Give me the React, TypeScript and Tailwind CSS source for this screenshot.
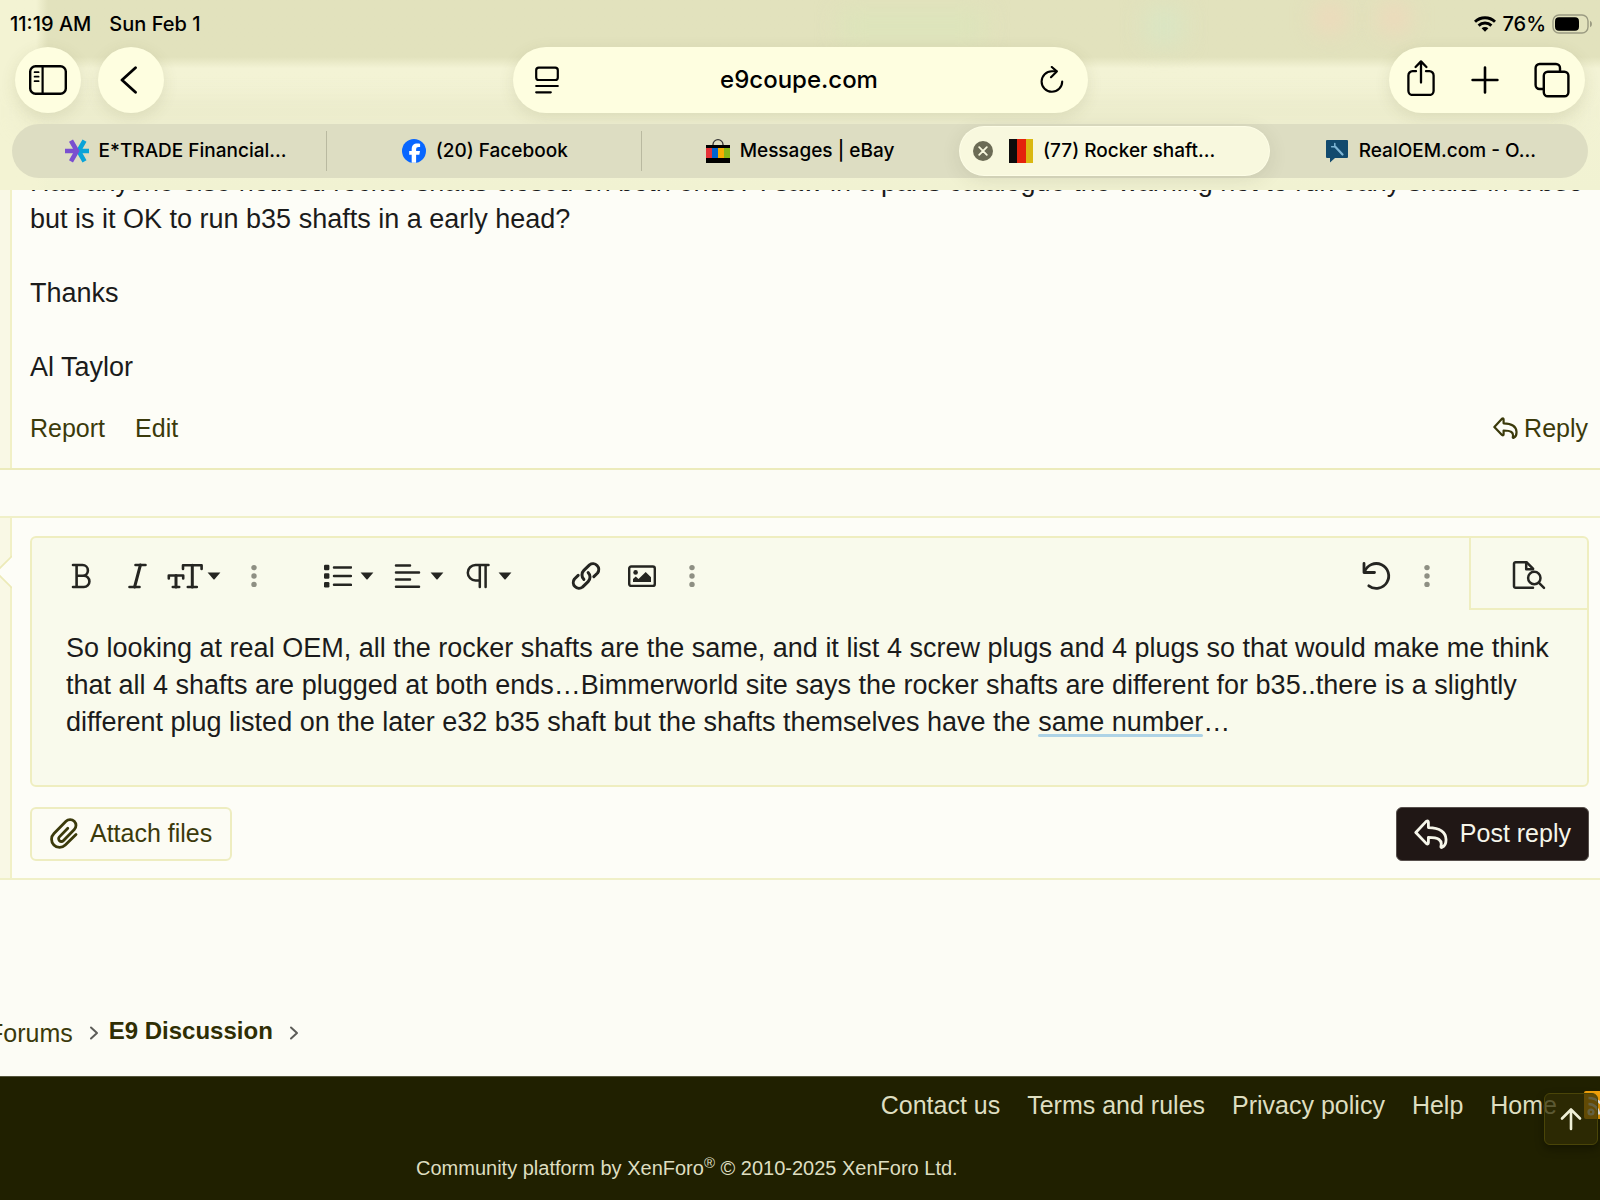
import type { ReactNode } from 'react';

const Caret = () => (
    <svg className="h-2 w-3.5" viewBox="0 0 14 8" fill="currentColor">
        <path d="M.6.6h12.8L7.6 7.2a.9.9 0 0 1-1.2 0z" />
    </svg>
)

const Dots = () => (
    <svg className="h-6 w-2 text-[#8e8f83]" viewBox="0 0 8 24" fill="currentColor">
        <circle cx="4" cy="3.6" r="2.7" />
        <circle cx="4" cy="12" r="2.7" />
        <circle cx="4" cy="20.4" r="2.7" />
    </svg>
)

const ReplyArrow = ({ className, strokeWidth }: { className: string; strokeWidth: number }) => (
    <svg className={className} viewBox="0 0 34 30" fill="none" stroke="currentColor" strokeWidth={strokeWidth} strokeLinejoin="round" strokeLinecap="round">
        <path d="M1.8 13.5 12.2 2.4Q14.4.9 14.4 3.4V8.6C25 8.8 31.6 12.6 32 20.2C32.2 24 30.4 27.3 28.2 28.3Q26.6 29 27 27.1C28.4 21 24.5 18.5 14.4 18.4V23.6Q14.2 26 12.2 24.4z" />
    </svg>
)

const Chevron = () => (
    <svg className="h-3.5 w-2.5 text-[#5c5c58]" viewBox="0 0 10 14" fill="none" stroke="currentColor" strokeWidth="2" strokeLinecap="round" strokeLinejoin="round">
        <path d="M2 1.5 8 7 2 12.5" />
    </svg>
)

const SidebarIcon = () => (
    <svg className="h-8 w-10" viewBox="0 0 40 32" fill="none" stroke="currentColor" strokeLinecap="round">
        <rect x="2.2" y="2.2" width="35.6" height="27.6" rx="5.4" strokeWidth="2.4" />
        <path d="M14.6 2.5v27" strokeWidth="2.2" />
        <path d="M6.6 8.2h4M6.6 12.7h4M6.6 17.2h4" strokeWidth="1.8" />
    </svg>
)

const BackIcon = () => (
    <svg className="mr-1 h-7 w-5" viewBox="0 0 20 28" fill="none" stroke="currentColor" strokeWidth="2.8" strokeLinecap="round" strokeLinejoin="round">
        <path d="M16.5 1.8 3 14l13.5 12.2" />
    </svg>
)

const ReaderIcon = () => (
    <svg className="h-7 w-6" viewBox="0 0 24 28" fill="none" stroke="currentColor" strokeWidth="2.2" strokeLinecap="round">
        <rect x="1.2" y="1.6" width="21.6" height="12.4" rx="2.6" />
        <path d="M1.2 20h21.6M1.2 26.3h14.6" />
    </svg>
)

const ReloadIcon = () => (
    <svg className="h-7 w-6" viewBox="0 0 24 28" fill="none" stroke="currentColor" strokeWidth="2.1" strokeLinecap="round" strokeLinejoin="round">
        <path d="M22.2 15.5A10.3 10.3 0 1 1 12 5.2h4.5" />
        <path d="M11.8 1 16.8 5.4 11 11.2" />
    </svg>
)

const ShareIcon = () => (
    <svg className="h-9 w-7" viewBox="0 0 28 36" fill="none" stroke="currentColor" strokeWidth="2.3" strokeLinecap="round" strokeLinejoin="round">
        <path d="M9 11.2H5.6A4.2 4.2 0 0 0 1.4 15.4V31a4.2 4.2 0 0 0 4.2 4h16.8a4.2 4.2 0 0 0 4.2-4V15.4A4.2 4.2 0 0 0 22.4 11.2H19" />
        <path d="M14 22.5V1.6M8.6 7 14 1.4 19.4 7" />
    </svg>
)

const PlusIcon = () => (
    <svg className="h-7 w-7" viewBox="0 0 28 28" fill="none" stroke="currentColor" strokeWidth="2.6" strokeLinecap="round">
        <path d="M14 1.6v24.8M1.6 14h24.8" />
    </svg>
)

const TabsIcon = () => (
    <svg className="h-9 w-9" viewBox="0 0 36 36" fill="none" stroke="currentColor" strokeWidth="2.4" strokeLinejoin="round">
        <rect x="9.8" y="9.8" width="24.6" height="24.4" rx="4" />
        <path d="M9.8 27H5.6a4 4 0 0 1-4-4V6a4 4 0 0 1 4-4H22a4 4 0 0 1 4 4v3.8" />
    </svg>
)

const Etrade = () => (
    <svg className="size-6" viewBox="0 0 24 24" strokeWidth="4.6">
        <path d="M24 12h-9M19.5 1.6 13.5 12l6 10.4" stroke="#0aa3d8" fill="none" />
        <path d="M0 12h12M6 1.6 12 12 6 22.4" stroke="#7a4fd0" fill="none" />
        <path d="M10 5.5 14 12l-4 6.5z" fill="#7a4fd0" />
    </svg>
)

const Facebook = () => (
    <svg className="size-6" viewBox="0 0 24 24">
        <circle cx="12" cy="12" r="12" fill="#0866ff" />
        <path d="M9.7 23.8V15.7H7.2V12.1h2.5v-1.7c0-4 1.9-5.9 5.9-5.9.8 0 2 .1 2.5.3v3.3c-.3 0-.7 0-1.3 0-1.9 0-2.7.7-2.7 2.6v1.4h3.9l-.7 3.6h-3.2v8.1z" fill="#fff" />
    </svg>
)

const Ebay = () => (
    <svg className="size-6" viewBox="0 0 24 24">
        <path d="M7 7V5.5a5 4.8 0 0 1 10 0V7" fill="none" stroke="#333" strokeWidth="1.3" />
        <path d="M0 6h24v18H0z" fill="#000" />
        <path d="M0 9h6v10H0z" fill="#e53238" />
        <path d="M6 9h6v10H6z" fill="#0064d2" />
        <path d="M12 9h6v10h-6z" fill="#f5af02" />
        <path d="M18 9h6v10h-6z" fill="#86b817" />
    </svg>
)

const Coupe = () => (
    <svg className="size-6" viewBox="0 0 24 24">
        <path d="M0 0h8v24H0z" fill="#0c0c0c" />
        <path d="M8 0h9v24H8z" fill="#e4220c" />
        <path d="M17 0h7v24h-7z" fill="#dab811" />
    </svg>
)

const RealOem = () => (
    <svg className="size-6" viewBox="0 0 24 24">
        <path d="M1.5 1h20.5a1 1 0 0 1 1 1v16a1 1 0 0 1-1 1H10l-5 4.5V19H2a1 1 0 0 1-1-1V2z" fill="#124a6e" />
        <path d="m10.5 8 7 7.5" stroke="#7fb6d6" strokeWidth="2.2" strokeLinecap="round" />
        <path d="M9.8 4.6v3.2H6.6" stroke="#7fb6d6" strokeWidth="1.5" fill="none" strokeLinecap="round" />
    </svg>
)

const BoldIcon = () => (
    <svg className="h-7 w-6" viewBox="0 0 24 28" fill="none" stroke="currentColor" strokeWidth="2.6" strokeLinecap="round" strokeLinejoin="round">
        <path d="M3 3h9.5a5.3 5.3 0 0 1 0 10.8H6.6M6.6 3v22M3 25h10.8a5.6 5.6 0 0 0 0-11.2" />
    </svg>
)

const ItalicIcon = () => (
    <svg className="h-7 w-5" viewBox="0 0 20 28" fill="none" stroke="currentColor" strokeWidth="2.6" strokeLinecap="round">
        <path d="M7.5 3h10M1.5 25h10" />
        <path d="M12.4 3 6.6 25" strokeWidth="3" />
    </svg>
)

const TextSizeIcon = () => (
    <svg className="-mr-1 h-7 w-9" viewBox="0 0 36 28" fill="none" stroke="currentColor" strokeWidth="2.6" strokeLinecap="round" strokeLinejoin="round">
        <path d="M16 7V3.2h18.6V7M20.8 25h9M1.8 16.500v-3h14.400v3M5.800 25h6.400" />
        <path d="M25.3 3.2V25M9 13.5V25" strokeWidth="3" />
    </svg>
)

const ListIcon = () => (
    <svg className="h-7 w-7" viewBox="0 0 28 28" fill="none" stroke="currentColor" strokeWidth="2.5" strokeLinecap="round">
        <path d="M10 5.4h17M10 14h17M10 22.8h17" />
        <g fill="currentColor" stroke="none">
            <rect y="2.8" width="5.4" height="5.4" rx="1.2" />
            <rect y="11.3" width="5.4" height="5.4" rx="1.2" />
            <rect y="20.1" width="5.4" height="5.4" rx="1.2" />
        </g>
    </svg>
)

const AlignIcon = () => (
    <svg className="h-7 w-7" viewBox="0 0 28 28" fill="none" stroke="currentColor" strokeWidth="2.5" strokeLinecap="round">
        <path d="M2 3.4h14M2 10.6h23M2 17.6h14M2 24.8h23" />
    </svg>
)

const ParagraphIcon = () => (
    <svg className="h-7 w-6" viewBox="0 0 24 28" fill="none" stroke="currentColor" strokeWidth="2.5" strokeLinecap="round">
        <path d="M22.5 3H9.5a7.7 7.7 0 0 0 0 15.4h4.3M13.8 3v22M19.6 3v22" />
    </svg>
)

const LinkIcon = () => (
    <svg className="size-[30px]" viewBox="0 0 28 28" fill="none" stroke="currentColor" strokeWidth="2.8" strokeLinecap="round" strokeLinejoin="round">
        <path d="M12 17.2a5.9 5.9 0 0 1 0-8.4l5.3-5.2a5.4 5.4 0 0 1 7.5 7.6l-3.5 3.4" />
        <path d="M16 10.8a5.9 5.9 0 0 1 0 8.4l-5.3 5.2a5.4 5.4 0 0 1-7.5-7.6l3.5-3.4" />
    </svg>
)

const ImageIcon = () => (
    <svg className="h-7 w-7" viewBox="0 0 28 28" fill="none" stroke="currentColor">
        <rect x="1.2" y="4.5" width="25.6" height="19.4" rx="2" strokeWidth="2.4" />
        <circle cx="7.6" cy="10.4" r="2.3" fill="currentColor" stroke="none" />
        <path d="M5 20v-3l2.8-2.6L10.5 17l7.2-7 5.3 5.2V20z" fill="currentColor" stroke="none" />
    </svg>
)

const UndoIcon = () => (
    <svg className="h-8 w-8" viewBox="0 0 32 32" fill="none" stroke="currentColor" strokeWidth="2.8" strokeLinecap="round" strokeLinejoin="round">
        <path d="M3 3.5V12.5h10.5" />
        <path d="M3.6 11.8A12.4 12.4 0 1 1 7.8 25.8" />
    </svg>
)

const PreviewIcon = () => (
    <svg className="h-8 w-9" viewBox="0 0 36 32" fill="none" stroke="currentColor" strokeWidth="2.5" strokeLinecap="round" strokeLinejoin="round">
        <path d="M22 28.8H4.6a1.6 1.6 0 0 1-1.6-1.6V4.8a1.6 1.6 0 0 1 1.6-1.6H15.5L22 9.6" />
        <path d="M15.2 3.5v6.8H22" />
        <circle cx="23.3" cy="19" r="6.2" />
        <path d="m28 23.8 5 5" />
    </svg>
)

const PaperclipIcon = () => (
    <svg className="h-8 w-7" viewBox="0 0 28 32" fill="none" stroke="currentColor" strokeWidth="2.8" strokeLinecap="round" strokeLinejoin="round">
        <path d="M17.8 10.2 9.4 18.9a2.7 2.7 0 0 0 3.9 3.8L24.3 11.5a5.8 5.8 0 0 0-8.3-8.2L4 15.5a8 8 0 0 0 11.3 11.6L26 16.6" />
    </svg>
)

const ArrowUp = () => (
    <svg className="h-6 w-6" viewBox="0 0 24 24" fill="none" stroke="currentColor" strokeWidth="2.6" strokeLinecap="round" strokeLinejoin="round">
        <path d="M12 22V2.5M3 11.5 12 2.5l9 9" />
    </svg>
)

const Wifi = () => (
    <svg className="h-4 w-[22px]" viewBox="0 0 22 16" fill="none" stroke="currentColor" strokeWidth="2.9">
        <path d="M1 5.8a14.3 14.3 0 0 1 20 0" />
        <path d="M4.6 9.6a9.2 9.2 0 0 1 12.8 0" />
        <path d="M11 15.8 7.6 12.3a4.9 4.9 0 0 1 6.8 0z" fill="currentColor" stroke="none" />
    </svg>
)

const Battery = () => (
    <svg className="h-5 w-10" viewBox="0 0 40 20">
        <rect x="1" y="1" width="35" height="18" rx="6" fill="none" stroke="#9b9b82" strokeWidth="1.4" />
        <rect x="3" y="3.2" width="24" height="13.6" rx="4" fill="#000" />
        <path d="M38 6.8q2 1 2 3.2t-2 3.2z" fill="#9b9b82" />
    </svg>
)

const tabs = [
    { title: 'E*TRADE Financial...', icon: <Etrade /> },
    { title: '(20) Facebook', icon: <Facebook /> },
    { title: 'Messages | eBay', icon: <Ebay /> },
    { title: '(77) Rocker shaft...', icon: <Coupe />, active: true },
    { title: 'RealOEM.com - O...', icon: <RealOem /> },
]

const footerLinks = ['Contact us', 'Terms and rules', 'Privacy policy', 'Help', 'Home']

const draft = 'So looking at real OEM, all the rocker shafts are the same, and it list 4 screw plugs and 4 plugs so that would make me think that all 4 shafts are plugged at both ends…Bimmerworld site says the rocker shafts are different for b35..there is a slightly different plug listed on the later e32 b35 shaft but the shafts themselves have the same number…'

const ToolButton = ({ label, className, menu, children }: { label: string; className: string; menu?: boolean; children: ReactNode }) => (
    <button type="button" aria-label={label} className={`flex h-full items-center justify-center gap-2 pt-1 ${className}`}>
        {children}
        {menu && <Caret />}
    </button>
)

const BrowserBar = () => (
    <header className="relative z-10 h-[190px] overflow-hidden bg-linear-to-b from-[#e2e2bd] from-30% via-[#f3f3d5] via-36% to-[#f1f2d2] font-[Inter,sans-serif] text-black">
        {/* page colours showing through the translucent bar */}
        <div className="absolute inset-y-0 left-0 w-12 bg-linear-to-r from-[#f3f3d3] from-75% to-transparent" />
        <div className="absolute top-3 left-[840px] h-7 w-36 bg-[#dce5bb] blur-md" />
        <div className="absolute top-2 left-[1146px] size-9 bg-[#d9e6c4] blur-md" />
        <div className="absolute top-1 left-[1316px] size-7 rounded-full bg-[#f3d6bb] blur-md" />
        <div className="absolute top-1 left-[1380px] size-7 rounded-full bg-[#f3d6bb] blur-md" />
        <div className="absolute inset-x-6 top-[104px] h-4 bg-[#e6e6c6] blur-md" />

        <div className="relative flex h-[47px] items-center justify-between pr-2 pl-2.5 text-[20px] font-medium">
            <div className="flex gap-[18px]">
                <span>11:19 AM</span>
                <span>Sun Feb 1</span>
            </div>
            <div className="flex items-center gap-1.5">
                <Wifi />
                <span>76%</span>
                <Battery />
            </div>
        </div>

        <div className="relative grid grid-cols-[1fr_575px_1fr] items-center px-[15px]">
            <div className="flex gap-[17px]">
                <button type="button" aria-label="Sidebar" className="flex size-[66px] items-center justify-center rounded-full bg-[#fefee0] shadow-[0_4px_16px_rgba(90,90,40,0.12)]">
                    <SidebarIcon />
                </button>
                <button type="button" aria-label="Back" className="flex size-[66px] items-center justify-center rounded-full bg-[#fefee0] shadow-[0_4px_16px_rgba(90,90,40,0.12)]">
                    <BackIcon />
                </button>
            </div>
            <div className="flex h-[66px] items-center rounded-full bg-[#fefee0] pr-6 pl-[22px] shadow-[0_4px_16px_rgba(90,90,40,0.12)]">
                <button type="button" aria-label="Page menu"><ReaderIcon /></button>
                <input aria-label="Address" defaultValue="e9coupe.com" className="min-w-0 flex-1 bg-transparent text-center text-[24px] font-medium" />
                <button type="button" aria-label="Reload"><ReloadIcon /></button>
            </div>
            <div className="flex h-[66px] w-[196px] items-center justify-between justify-self-end rounded-full bg-[#fefee0] pr-[15px] pl-[18px] shadow-[0_4px_16px_rgba(90,90,40,0.12)]">
                <button type="button" aria-label="Share" className="pb-1"><ShareIcon /></button>
                <button type="button" aria-label="New tab"><PlusIcon /></button>
                <button type="button" aria-label="Show tabs"><TabsIcon /></button>
            </div>
        </div>

        <nav className="relative mx-3 mt-[11px] grid h-[54px] grid-cols-5 rounded-full bg-[#ddddc2]">
            {tabs.map((tab, i) => (
                <div key={tab.title} className={`flex items-center first:pl-3 ${i < 2 ? 'bg-[linear-gradient(#b9b9a0,#b9b9a0)] bg-[length:1px_40px] bg-right bg-no-repeat' : ''}`}>
                    <div className={`flex h-12 flex-1 items-center justify-center gap-2.5 rounded-full ${tab.active ? 'mr-1 ml-0.5 bg-[#f8f8de] pr-10 shadow-[0_4px_20px_rgba(60,60,30,0.12)] ring-1 ring-[#fdfde6]' : ''}`}>
                        {tab.active && (
                            <button type="button" aria-label="Close tab" className="mr-1.5 flex size-5 items-center justify-center rounded-full bg-[#6b6b55]">
                                <svg className="size-2.5" viewBox="0 0 10 10" stroke="#f8f8de" strokeWidth="1.8" strokeLinecap="round">
                                    <path d="m1.2 1.2 7.6 7.6M8.8 1.2 1.2 8.8" />
                                </svg>
                            </button>
                        )}
                        {tab.icon}
                        <a href="#" className="text-[19px] font-medium whitespace-nowrap">{tab.title}</a>
                    </div>
                </div>
            ))}
        </nav>
    </header>
)

const Message = () => (
    <article className="flex border-b-2 border-[#ecebbb] bg-[#fdfdf7]">
        <div className="w-3 shrink-0 border-r-2 border-[#f1f0c6] bg-[#f9f8e5]" />
        <div className="min-w-0 flex-1 pr-3 pl-[18px]">
            <div className="-mt-[26px] text-[27px] leading-[37px] text-[#1b1b1b]">
                <p>
                    Has anyone else noticed rocker shafts closed on both ends? I saw in a parts catalogue the warning not to run early shafts in a b35 but is it OK to run b35 shafts in a early head?
                </p>
                <p className="mt-[37px]">Thanks</p>
                <p className="mt-[37px]">Al Taylor</p>
            </div>
            <div className="mt-[25px] mb-[23px] flex items-center justify-between text-[25px] leading-[34px] text-[#3b3a0b]">
                <div className="flex gap-[30px]">
                    <a href="#">Report</a>
                    <a href="#">Edit</a>
                </div>
                <a href="#" className="flex items-center gap-1.5">
                    <ReplyArrow className="h-[22px] w-[25px]" strokeWidth={3} />
                    Reply
                </a>
            </div>
        </div>
    </article>
)

const QuickReply = () => (
    <form className="mt-[46px] flex border-y-2 border-[#f0f0c8] bg-[#fdfdf7]">
        <div className="relative w-3 shrink-0 border-r-2 border-[#f1f0c6] bg-[#f9f8e5]">
            <svg className="absolute top-9 left-0 h-9 w-3" viewBox="0 0 12 36">
                <path d="M12 2-4 18l16 16z" fill="#fdfdf7" />
                <path d="M12 2-4 18l16 16" fill="none" stroke="#eceab8" strokeWidth="1.6" />
            </svg>
        </div>
        <div className="min-w-0 flex-1 pt-[18px] pr-[11px] pb-[17px] pl-[18px]">
            <div className="rounded-md border-2 border-[#efeec0] bg-[#f9faec]">
                <div className="flex h-[72px] text-[#252521]">
                    <div className="flex flex-1 items-center pl-[22px]">
                        <ToolButton label="Bold" className="w-14"><BoldIcon /></ToolButton>
                        <ToolButton label="Italic" className="w-14"><ItalicIcon /></ToolButton>
                        <ToolButton label="Font size" className="w-14" menu><TextSizeIcon /></ToolButton>
                        <ToolButton label="More text" className="w-16"><Dots /></ToolButton>
                        <ToolButton label="List" className="ml-7 w-[70px]" menu><ListIcon /></ToolButton>
                        <ToolButton label="Align" className="w-[70px]" menu><AlignIcon /></ToolButton>
                        <ToolButton label="Paragraph format" className="w-[70px]" menu><ParagraphIcon /></ToolButton>
                        <ToolButton label="Insert link" className="ml-[34px] w-14"><LinkIcon /></ToolButton>
                        <ToolButton label="Insert image" className="w-14"><ImageIcon /></ToolButton>
                        <ToolButton label="More rich" className="w-11"><Dots /></ToolButton>
                        <ToolButton label="Undo" className="ml-auto w-14"><UndoIcon /></ToolButton>
                        <ToolButton label="More misc" className="mr-5 w-11"><Dots /></ToolButton>
                    </div>
                    <ToolButton label="Preview" className="w-[118px] border-b-2 border-l-2 border-[#efeec0]"><PreviewIcon /></ToolButton>
                </div>
                <div className="relative pt-5 pr-8 pl-[34px]">
                    <textarea aria-label="Reply" defaultValue={draft} spellCheck={false} className="block h-[155px] w-full resize-none overflow-hidden bg-transparent text-[27px] leading-[37px] text-[#1b1b1b]" />
                    {/* grammar mark under the last words */}
                    <span className="absolute top-[124px] left-[1006px] h-[3px] w-[165px] rounded-full bg-[#aed3e6]" />
                </div>
            </div>
            <div className="mt-5 flex items-center justify-between text-[25px]">
                <button type="button" className="flex h-[54px] items-center gap-3 rounded-md border-2 border-[#eeedc0] bg-[#fcfcf4] px-[18px] text-[#3b3a0b]">
                    <PaperclipIcon />
                    Attach files
                </button>
                <button type="submit" className="flex h-[54px] items-center gap-3 rounded-md border border-[#57504c] bg-[#201715] px-[17px] text-[#f6f6ea]">
                    <ReplyArrow className="h-[30px] w-[34px]" strokeWidth={2.8} />
                    Post reply
                </button>
            </div>
        </div>
    </form>
)

const Footer = () => (
    <footer className="relative flex-1 overflow-hidden border-t border-[#55553c] bg-[#202000] text-[#dedec0]">
        <div className="-mr-3 flex items-center justify-end gap-[27px] pt-[11px] text-[25px] leading-[34px]">
            {footerLinks.map(link => (
                <a key={link} href="#">{link}</a>
            ))}
            <a href="#" aria-label="RSS">
                <svg className="size-7" viewBox="0 0 28 28" fill="none" stroke="#fff" strokeWidth="2.4">
                    <rect width="28" height="28" rx="2" fill="#f5a30a" stroke="none" />
                    <circle cx="7" cy="21" r="2.4" />
                    <path d="M4.5 13a10.5 10.5 0 0 1 10.5 10.5M4.5 7A16.5 16.5 0 0 1 21 23.5" />
                </svg>
            </a>
        </div>
        <p className="mt-[30px] pl-[26%] text-[20px] leading-8">
            Community platform by XenForo<sup>®</sup> © 2010-2025 XenForo Ltd.
        </p>
        <button type="button" aria-label="Top" className="absolute top-4 right-0.5 flex h-[52px] w-[54px] items-center justify-center rounded-md border border-[#4a4508] bg-[#302c04]/75 text-[#efefd6] shadow-[0_4px_8px_rgba(0,0,0,0.35)]">
            <ArrowUp />
        </button>
    </footer>
)

export default function App() {
    return (
        <div className="flex min-h-screen flex-col overflow-x-hidden bg-[#fcfcf5] font-['Liberation_Sans',Arial,sans-serif]">
            <BrowserBar />
            <Message />
            <QuickReply />
            <nav className="mt-[134px] -ml-3 flex h-[62px] items-start text-[25px] leading-[34px] text-[#3b3a0b]">
                <a href="#" className="mt-0.5">Forums</a>
                <span className="mt-3 mr-2.5 ml-4"><Chevron /></span>
                <a href="#" className="text-[24px] font-bold text-[#2f2e04]">E9 Discussion</a>
                <span className="mt-3 ml-4"><Chevron /></span>
            </nav>
            <Footer />
        </div>
    );
}
